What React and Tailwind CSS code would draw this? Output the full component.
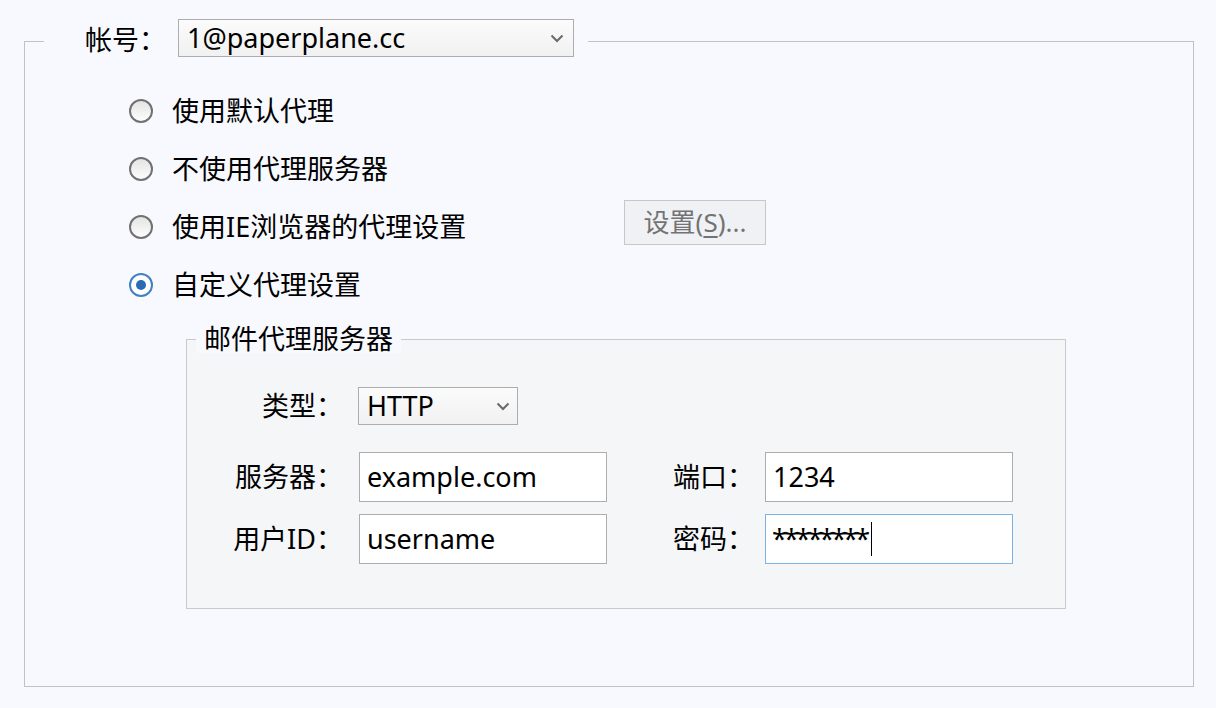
import React from "react";

function Chevron() {
  return (
    <svg width="14" height="9" viewBox="0 0 14 9" className="shrink-0">
      <polyline points="1.5,1.5 7,7 12.5,1.5" fill="none" stroke="#6a6a6a" strokeWidth="2" />
    </svg>
  );
}

function Radio({ checked }) {
  if (checked) {
    return (
      <div className="w-[24px] h-[24px] rounded-full border-2 border-[#3f81c4] bg-white flex items-center justify-center shrink-0">
        <div className="w-[10px] h-[10px] rounded-full bg-[#2a6bb2]" />
      </div>
    );
  }
  return (
    <div className="w-[24px] h-[24px] rounded-full border-2 border-[#717171] bg-gradient-to-b from-[#e4e4e4] to-[#fdfdfd] shrink-0" />
  );
}

function RadioRow({ checked, children }) {
  return (
    <div className="h-[58px] flex items-center pl-[104px]">
      <Radio checked={checked} />
      <span className="ml-[19px] text-[27px] leading-[34px] text-black whitespace-nowrap">{children}</span>
    </div>
  );
}

export default function App() {
  return (
    <div className="w-[1216px] h-[708px] overflow-hidden bg-[#f8f9fe] pt-[19px] font-['Noto_Sans','Noto_Sans_CJK_SC',sans-serif] text-black">
      <fieldset className="ml-[24px] w-[1170px] h-[668px] border border-[#c2c2c2]">
        <legend className="ml-[19px] pl-[41px] pr-[14px] h-[44px]">
          <div className="flex items-start">
            <div className="h-[42px] flex items-center text-[27px] leading-[34px] w-[93px] whitespace-nowrap">帐号：</div>
            <div className="w-[396px] h-[38px] border border-[#adadad] bg-gradient-to-b from-[#fbfbfb] to-[#f1f1f1] flex items-center justify-between pl-[8px] pr-[9px]">
              <span className="text-[27px] leading-[34px]">1@paperplane.cc</span>
              <Chevron />
            </div>
          </div>
        </legend>

        <div className="pt-[19px]">
          <RadioRow>使用默认代理</RadioRow>
          <RadioRow>不使用代理服务器</RadioRow>
          <div className="h-[58px] flex items-center pl-[104px]">
            <Radio />
            <span className="ml-[19px] w-[452px] text-[27px] leading-[34px] text-black whitespace-nowrap">使用IE浏览器的代理设置</span>
            <div className="mb-[10px] w-[142px] h-[45px] border border-[#c7c7c7] bg-[#f0f1f4] flex items-center justify-center text-[26px] leading-[34px] text-[#737373] whitespace-nowrap">
              设置(<span className="underline underline-offset-[4px]">S</span>)...
            </div>
          </div>
          <RadioRow checked>自定义代理设置</RadioRow>
        </div>

        <fieldset className="mt-[11px] ml-[161px] w-[880px] border border-[#c9c9c9] bg-[#f5f6f8] pb-[44px]">
          <legend className="ml-[9px] px-[8px] h-[28px] bg-[#f8f9fe] text-[27px] leading-[28px] whitespace-nowrap">邮件代理服务器</legend>

          <div className="pt-[34px]">
            <div className="flex items-center">
              <div className="w-[156px] text-right text-[27px] leading-[34px] whitespace-nowrap">类型：</div>
              <div className="ml-[15px] w-[160px] h-[38px] border border-[#adadad] bg-gradient-to-b from-[#fbfbfb] to-[#f1f1f1] flex items-center justify-between pl-[8px] pr-[7px]">
                <span className="text-[27px] leading-[34px]">HTTP</span>
                <Chevron />
              </div>
            </div>

            <div className="mt-[27px] flex items-center">
              <div className="w-[156px] text-right text-[27px] leading-[34px] whitespace-nowrap">服务器：</div>
              <div className="ml-[16px] w-[248px] h-[50px] border border-[#adadad] bg-white flex items-center pl-[7px]">
                <span className="text-[27px] leading-[34px]">example.com</span>
              </div>
              <div className="ml-[66px] w-[92px] text-[27px] leading-[34px] whitespace-nowrap">端口：</div>
              <div className="w-[248px] h-[50px] border border-[#adadad] bg-white flex items-center pl-[7px]">
                <span className="text-[27px] leading-[34px]">1234</span>
              </div>
            </div>

            <div className="mt-[12px] flex items-center">
              <div className="w-[156px] text-right text-[27px] leading-[34px] whitespace-nowrap">用户ID：</div>
              <div className="ml-[16px] w-[248px] h-[50px] border border-[#adadad] bg-white flex items-center pl-[7px]">
                <span className="text-[27px] leading-[34px]">username</span>
              </div>
              <div className="ml-[66px] w-[92px] text-[27px] leading-[34px] whitespace-nowrap">密码：</div>
              <div className="w-[248px] h-[50px] border border-[#7db2e8] bg-white flex items-center pl-[6px]">
                <span className="text-[27px] leading-[34px] tracking-[-3px]">********</span>
                <span className="ml-[4px] w-px h-[34px] bg-black" />
              </div>
            </div>
          </div>
        </fieldset>
      </fieldset>
    </div>
  );
}
